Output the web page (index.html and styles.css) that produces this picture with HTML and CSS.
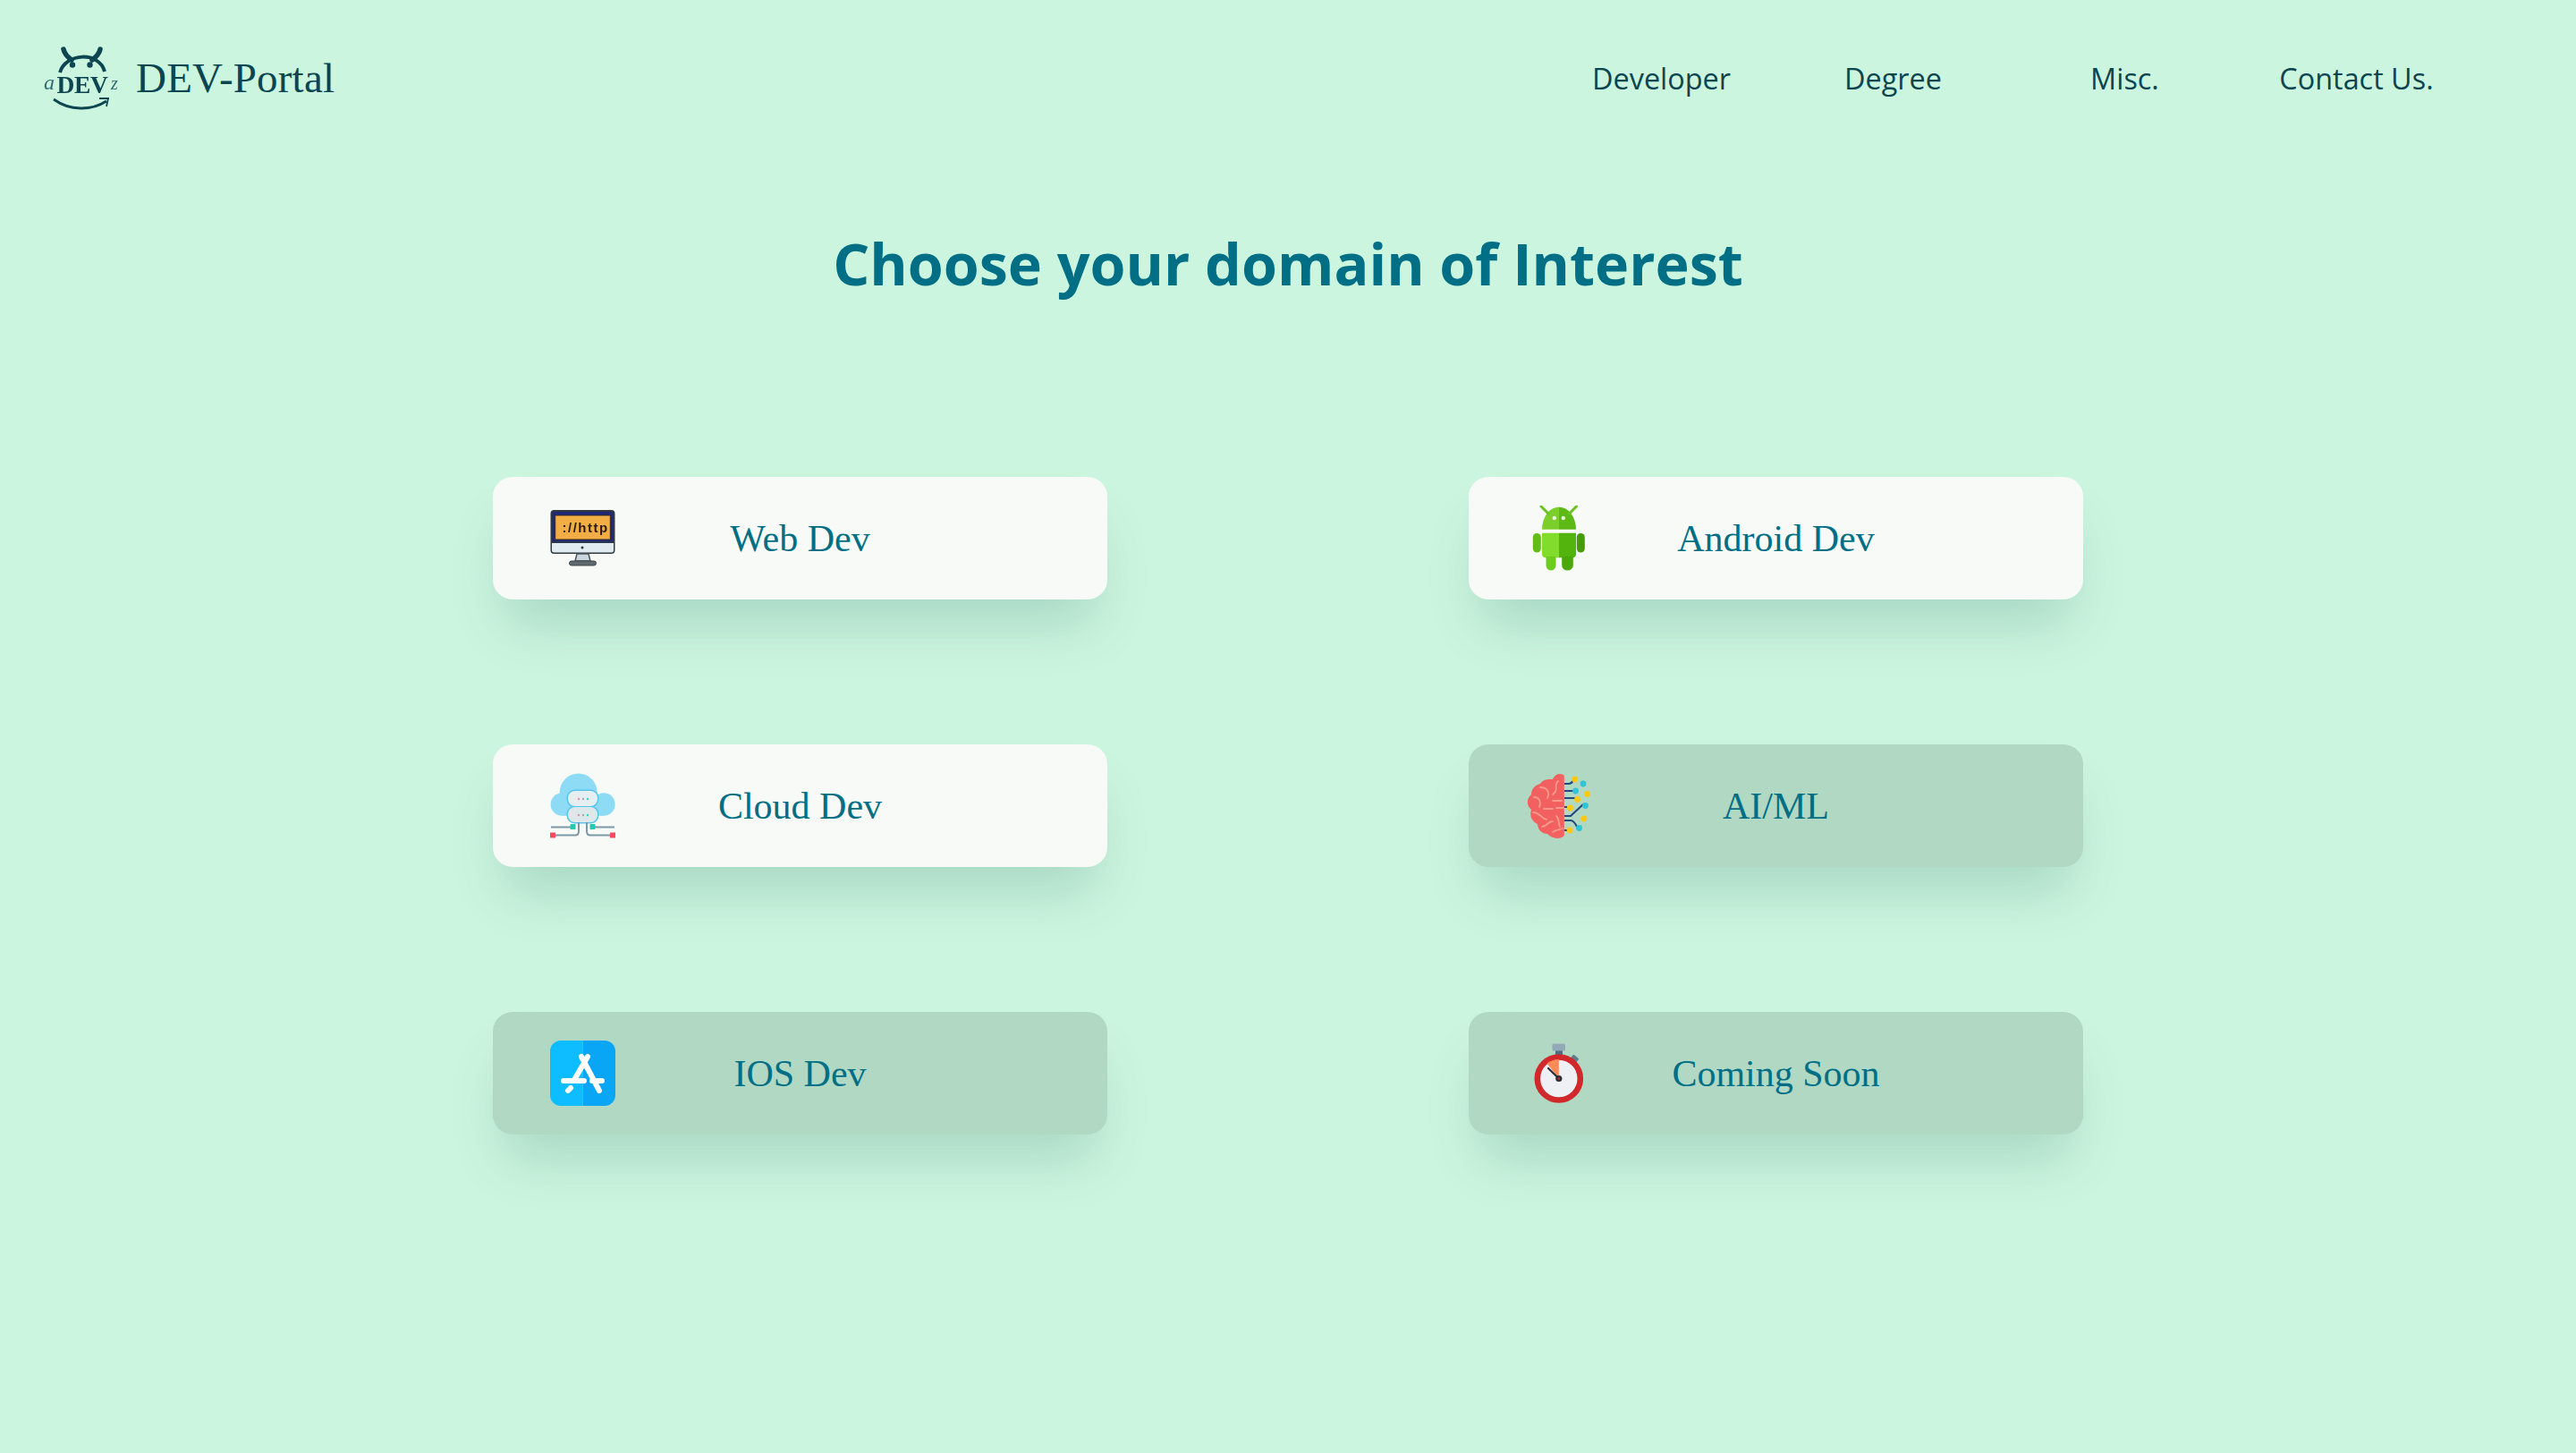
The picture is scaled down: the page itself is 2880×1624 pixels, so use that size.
FILE: index.html
```html
<!DOCTYPE html>
<html lang="en">
<head>
<meta charset="utf-8">
<title>DEV-Portal</title>
<link rel="stylesheet" href="styles.css">
</head>
<body>
<header class="header">
  <a class="brand">
    <svg class="logo" viewBox="0 0 110 90">
      <path class="logo-line" d="M27 39C33 17 71 15 77 38"/>
      <path class="logo-ant" d="M31 13C32 18 36 22 40 25M72 13C71 18 67 22 63 25"/>
      <circle class="logo-dot" cx="41" cy="30.500" r="3.200"/>
      <circle class="logo-dot" cx="60.500" cy="30.500" r="3.200"/>
      <text class="logo-dev" x="23.500" y="62">DEV</text>
      <text class="logo-side logo-a" x="9" y="58">a</text>
      <text class="logo-side logo-z" x="84" y="58">z</text>
      <path class="logo-smile" d="M20 69C38 82 62 82 79 71"/>
      <path class="logo-smile-tip" d="M71 68L81 68L79 77"/>
    </svg>
    <span class="brand-name">DEV-Portal</span>
  </a>
  <nav class="nav">
    <a class="nav-link">Developer</a>
    <a class="nav-link">Degree</a>
    <a class="nav-link">Misc.</a>
    <a class="nav-link">Contact Us.</a>
  </nav>
</header>
<main class="main">
  <h1 class="title">Choose your domain of Interest</h1>
  <section class="grid">
    <a class="card">
      <svg class="icon" viewBox="0 0 73 73">
        <rect x="1.500" y="6" width="70" height="47" rx="3" fill="#1e2a78" stroke="#33383f" stroke-width="2"/>
        <rect x="5.700" y="11" width="61.600" height="27" fill="#f2ae45" stroke="#3b2a20" stroke-width="1"/>
        <text class="http" x="13.500" y="30">://http</text>
        <path d="M2 42H71V50a2.500 2.500 0 0 1-2.500 2.500H4.500A2.500 2.500 0 0 1 2 50Z" fill="#dfeaf1"/>
        <path d="M1.500 41H71.500" stroke="#33383f" stroke-width="1.500"/>
        <circle cx="36" cy="47" r="1.500" fill="#33383f"/>
        <path d="M30 54H43L45 62H28Z" fill="#c9d6dd" stroke="#4c5359" stroke-width="1.500"/>
        <rect x="21.500" y="62" width="30" height="5" rx="2.500" fill="#5f6a70" stroke="#3e464b" stroke-width="1"/>
      </svg>
      <span class="card-label">Web Dev</span>
    </a>
    <a class="card">
      <svg class="icon" viewBox="0 0 73 73">
        <path d="M18 26.700a19 25 0 0 1 19-25V26.700Z" fill="#7ccf2a"/>
        <path d="M37 1.700a19 25 0 0 1 19 25H37Z" fill="#5db915"/>
        <path d="M17 1L25 9M56.500 1L48.500 9" stroke="#6ac41d" stroke-width="3" stroke-linecap="round"/>
        <circle cx="31.800" cy="14" r="2.200" fill="#eaf7d8"/>
        <circle cx="41.800" cy="14" r="2.200" fill="#eaf7d8"/>
        <path d="M18 30.700H37V58.300H22a4 4 0 0 1-4-4Z" fill="#82dc2c"/>
        <path d="M37 30.700H56V54.300a4 4 0 0 1-4 4H37Z" fill="#54b40e"/>
        <rect x="7.800" y="31" width="9" height="21.500" rx="4.500" fill="#62bd18"/>
        <rect x="56.800" y="31" width="9" height="21.500" rx="4.500" fill="#479a08"/>
        <path d="M22.500 57H33.500V67a5.500 5.500 0 0 1-11 0Z" fill="#6ecb1f"/>
        <path d="M40.200 57H52.800V67a6.300 5.500 0 0 1-12.600 0Z" fill="#4aa80a"/>
      </svg>
      <span class="card-label">Android Dev</span>
    </a>
    <a class="card">
      <svg class="icon" viewBox="0 0 73 73">
        <circle cx="31.700" cy="21.500" r="21" fill="#8edbf5"/>
        <circle cx="13.300" cy="35" r="12.700" fill="#8edbf5"/>
        <circle cx="60" cy="35" r="12.700" fill="#8edbf5"/>
        <rect x="13" y="28" width="47" height="19.700" fill="#8edbf5"/>
        <rect x="18.500" y="18.500" width="36" height="20" rx="9" fill="#58c6ea"/>
        <rect x="18.500" y="36.500" width="36" height="20" rx="9" fill="#58c6ea"/>
        <rect x="20" y="20" width="33" height="17" rx="8" fill="#e6eef1"/>
        <rect x="20" y="38" width="33" height="17" rx="8" fill="#dee8eb"/>
        <circle cx="32" cy="29" r="1.200" fill="#f58a9c"/><circle cx="37" cy="29" r="1.200" fill="#9bb0ba"/><circle cx="42" cy="29" r="1.200" fill="#3fd0b8"/>
        <circle cx="32" cy="47" r="1.200" fill="#f58a9c"/><circle cx="37" cy="47" r="1.200" fill="#9bb0ba"/><circle cx="42" cy="47" r="1.200" fill="#3fd0b8"/>
        <path d="M1 60.500H25M48 60.500H72M3 69.500H28Q32 69.500 32 65V55M70 69.500H45Q41 69.500 41 65V55" fill="none" stroke="#7c97a5" stroke-width="2"/>
        <rect x="22.500" y="57" width="6" height="6" rx="1" fill="#23c9b0"/>
        <rect x="44.500" y="57" width="6" height="6" rx="1" fill="#23c9b0"/>
        <rect x="0" y="66.500" width="6" height="6" fill="#f64a5e"/>
        <rect x="67" y="66.500" width="6" height="6" fill="#f64a5e"/>
      </svg>
      <span class="card-label">Cloud Dev</span>
    </a>
    <a class="card card-off">
      <svg class="icon" viewBox="0 0 73 73">
        <path d="M42.800 3V70C38 75 28 73 24 68C17 68 13 62 13 57C6 54 4 47 6 41C0 36 1 28 6 24C6 16 12 13 16 12C20 6 26 7 30 7C33 0 40 0 42.800 3Z" fill="#f2605f"/>
        <path d="M36 9C30 14 38 18 30 24M16 16C24 16 27 22 24 28M9 27C16 27 17 34 15 38M30 31H40M34 39H42M20 40H30M8 44C16 44 18 52 23 52M34 48C38 52 36 58 38 60M18 60C24 60 24 54 30 54M30 66C36 62 36 64 41 62" fill="none" stroke="#f99a8e" stroke-width="1.800" stroke-linecap="round"/>
        <path d="M43 12H48Q51 12 53 8M43 20H55M43 28H57M43 38H46M43 48H50L64 35M43 53H50Q54 53 58 62M43 64H46" fill="none" stroke="#234a80" stroke-width="2.200"/>
        <circle cx="54.500" cy="7" r="3.400" fill="#ffc812"/>
        <circle cx="64" cy="12" r="3.400" fill="#2fc5d8"/>
        <circle cx="55.500" cy="20" r="3.400" fill="#2fc5d8"/>
        <circle cx="68.500" cy="23.500" r="3.400" fill="#ffc812"/>
        <circle cx="57.500" cy="29.500" r="3.400" fill="#ffc812"/>
        <circle cx="49.500" cy="39" r="3.400" fill="#ffc812"/>
        <circle cx="66.500" cy="36.500" r="3.400" fill="#2fc5d8"/>
        <circle cx="65" cy="51" r="3.400" fill="#ffc812"/>
        <circle cx="59.500" cy="61.500" r="3.400" fill="#2fc5d8"/>
        <circle cx="49" cy="64" r="3.400" fill="#ffc812"/>
      </svg>
      <span class="card-label">AI/ML</span>
    </a>
    <a class="card card-off">
      <svg class="icon" viewBox="0 0 73 73">
        <path d="M36.500 0H61a12 12 0 0 1 12 12V61a12 12 0 0 1-12 12H36.500Z" fill="#0aa6f6"/>
        <path d="M36.500 0H12A12 12 0 0 0 0 12V61A12 12 0 0 0 12 73H36.500Z" fill="#0dbdff"/>
        <path d="M15 45H38M47 45H58M42 18L27 44M35 18L55 56M20 56L23 53" stroke="#fff" stroke-width="6" stroke-linecap="round" fill="none"/>
      </svg>
      <span class="card-label">IOS Dev</span>
    </a>
    <a class="card card-off">
      <svg class="icon" viewBox="0 0 73 73">
        <rect x="33" y="11" width="8" height="8" fill="#4f6d80"/>
        <rect x="29.500" y="3.500" width="14.500" height="8" rx="1.500" fill="#93a9b8"/>
        <rect x="50.500" y="17" width="8" height="6" rx="1" fill="#5e7c8e" transform="rotate(40 54 20)"/>
        <circle cx="36.800" cy="42.500" r="24" fill="#eef0f5" stroke="#d0282b" stroke-width="6.600"/>
        <path d="M36.800 42.500L36.800 21A22 22 0 0 0 23.500 25.500Z" fill="#ff8a57"/>
        <path d="M36.800 42.500L25 31" stroke="#2b2e36" stroke-width="2.200" stroke-linecap="round"/>
        <circle cx="36.800" cy="42.500" r="3.600" fill="#2b2e36"/>
        <circle cx="36.800" cy="42.500" r="1.300" fill="#c9252c"/>
      </svg>
      <span class="card-label">Coming Soon</span>
    </a>
  </section>
</main>
</body>
</html>
```
FILE: styles.css
```css
* {
  box-sizing: border-box;
}

html,
body {
  margin: 0;
  min-height: 1624px;
  background: #ccf5df;
}

body {
  font-family: "Open Sans", sans-serif;
  color: #0b4650;
}

.header {
  display: flex;
  justify-content: space-between;
  align-items: center;
  height: 170px;
  padding: 4px 116px 0 40px;
}

.brand {
  display: flex;
  align-items: center;
  gap: 2px;
}

.logo {
  display: block;
  width: 110px;
  height: 90px;
  filter: blur(0.4px);
}

.logo-line,
.logo-ant,
.logo-smile,
.logo-smile-tip {
  fill: none;
  stroke: #0d4650;
}

.logo-line {
  stroke-width: 4;
}

.logo-ant {
  stroke-width: 5.500;
  stroke-linecap: round;
}

.logo-dot {
  fill: #0d4650;
}

.logo-dev {
  font-family: "Liberation Serif", serif;
  font-weight: 700;
  font-size: 27.500px;
  letter-spacing: -0.300px;
  fill: #0d4650;
}

.logo-side {
  font-family: "Liberation Serif", serif;
  font-style: italic;
  fill: #2f6a70;
}

.logo-a {
  font-size: 24px;
}

.logo-z {
  font-size: 20px;
}

.logo-smile {
  stroke-width: 2.800;
}

.logo-smile-tip {
  stroke-width: 1.800;
}

.brand-name {
  font-family: "Liberation Serif", serif;
  font-size: 47px;
  line-height: 1;
  letter-spacing: 0.200px;
  color: #0b4650;
}

.nav {
  display: grid;
  grid-template-columns: repeat(4, 259px);
}

.nav-link {
  font-size: 32.400px;
  line-height: 44px;
  text-align: center;
  color: #0b4650;
}

.main {
  display: flex;
  flex-direction: column;
  align-items: center;
}

.title {
  margin: 79px 0 0;
  font-size: 64.600px;
  line-height: 90px;
  font-weight: 700;
  color: #006f85;
}

.grid {
  display: grid;
  grid-template-columns: repeat(2, 687px);
  grid-auto-rows: 137px;
  column-gap: 404px;
  row-gap: 162px;
  margin-top: 194px;
}

.card {
  display: grid;
  grid-template-columns: 73px 1fr 73px;
  align-items: center;
  padding: 0 64px;
  border-radius: 22px;
  background: #f7faf7;
  box-shadow: 0 40px 60px -14px rgba(10, 90, 80, 0.19);
}

.card-off {
  background: #b0d8c2;
}

.icon {
  display: block;
  width: 73px;
  height: 73px;
  filter: blur(0.5px);
}

.http {
  font-family: "Liberation Sans", sans-serif;
  font-size: 15px;
  font-weight: 700;
  letter-spacing: 1.500px;
  fill: #2a1c14;
}

.card-label {
  font-family: "Liberation Serif", serif;
  font-size: 42px;
  line-height: 50px;
  text-align: center;
  color: #006f85;
}
```
